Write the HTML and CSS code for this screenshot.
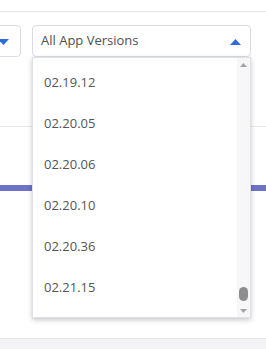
FILE: index.html
```html
<!DOCTYPE html>
<html lang="en">
<head>
    <meta charset="UTF-8">
    <meta name="viewport" content="width=device-width, initial-scale=1.0">
    <title>App Versions</title>
    <link rel="stylesheet" href="styles.css">
</head>
<body>

    <div class="page">
        <div class="topbar"></div>

        <div class="filters">
            <div class="select select-left">
                <span class="caret">
                    <svg width="11" height="6" viewBox="0 0 11 6"><path d="M0 0h11L5.5 6z" fill="#2c6fdc"/></svg>
                </span>
            </div>

            <div class="select select-versions">
                <span class="select-label">All App Versions</span>
                <span class="caret">
                    <svg width="11" height="6" viewBox="0 0 11 6"><path d="M0 6h11L5.5 0z" fill="#2c6fdc"/></svg>
                </span>

                <!-- opened list of versions -->
                <div class="dropdown">
                    <ul class="options">
                        <li>02.19.12</li>
                        <li>02.20.05</li>
                        <li>02.20.06</li>
                        <li>02.20.10</li>
                        <li>02.20.36</li>
                        <li>02.21.15</li>
                    </ul>
                    <div class="scrollbar">
                        <span class="scroll-btn">
                            <svg width="7" height="4" viewBox="0 0 7 4"><path d="M0 4h7L3.5 0z" fill="#a3a3a3"/></svg>
                        </span>
                        <div class="scroll-track">
                            <div class="scroll-thumb"></div>
                        </div>
                        <span class="scroll-btn">
                            <svg width="7" height="4" viewBox="0 0 7 4"><path d="M0 0h7L3.5 4z" fill="#a3a3a3"/></svg>
                        </span>
                    </div>
                </div>
            </div>
        </div>

        <div class="chart">
            <div class="chart-bar"></div>
        </div>

        <div class="footer"></div>
    </div>

</body>
</html>
```

FILE: styles.css
```css
body {
    margin: 0;
    background: #fff;
    font-family: "Open Sans", "Noto Sans", sans-serif;
    color: #555;
    overflow: hidden;
}

.page {
    width: 266px;
    height: 349px;
    overflow: hidden;
}

.topbar {
    height: 11px;
    border-bottom: 1px solid #e7e8ee;
}

.filters {
    display: flex;
    gap: 11px;
    margin-top: 13px;
    height: 32px;
}

.select {
    position: relative;
    box-sizing: border-box;
    height: 32px;
    border: 1px solid #d9dce5;
    border-radius: 4px;
    background: #fff;
    display: flex;
    align-items: center;
}

.select-left {
    width: 60px;
    margin-left: -39px;
    justify-content: flex-end;
    padding-right: 11px;
}

.select-versions {
    width: 219px;
    padding: 0 8px 0 8px;
    justify-content: space-between;
}

.select-label {
    font-size: 13px;
    color: #4f4f4f;
    line-height: 1;
    margin-top: -1px;
}

.caret {
    display: flex;
    width: 11px;
    height: 6px;
    margin-top: 1px;
}

.select-versions .caret {
    margin-right: 1px;
}

.dropdown {
    position: absolute;
    top: 31px;
    left: -1px;
    z-index: 5;
    box-sizing: border-box;
    width: 219px;
    height: 261px;
    background: #fff;
    border: 1px solid #dde0e7;
    box-shadow: 0 2px 5px rgba(0, 0, 0, 0.22);
    display: flex;
    overflow: hidden;
}

.options {
    flex: 1;
    list-style: none;
    margin: 0;
    padding: 4px 0 0 11px;
}

.options li {
    height: 41px;
    line-height: 41px;
    font-size: 13px;
    color: #555;
}

.scrollbar {
    width: 13px;
    background: #f7f7f8;
    display: flex;
    flex-direction: column;
    align-items: center;
}

.scroll-btn {
    height: 13px;
    display: flex;
    align-items: center;
    justify-content: center;
}

.scroll-track {
    flex: 1;
    display: flex;
    flex-direction: column;
    justify-content: flex-end;
    padding-bottom: 3px;
}

.scroll-thumb {
    width: 9px;
    height: 14px;
    border-radius: 5px;
    background: #8d8d8d;
}

.chart {
    margin-top: 69px;
    height: 211px;
    border-top: 1px solid #e9e9ee;
}

.chart-bar {
    margin-top: 58px;
    height: 6px;
    background: #6e73c8;
}

.footer {
    height: 20px;
    border-top: 1px solid #e3e3e8;
    background: #f4f4f6;
}
```
